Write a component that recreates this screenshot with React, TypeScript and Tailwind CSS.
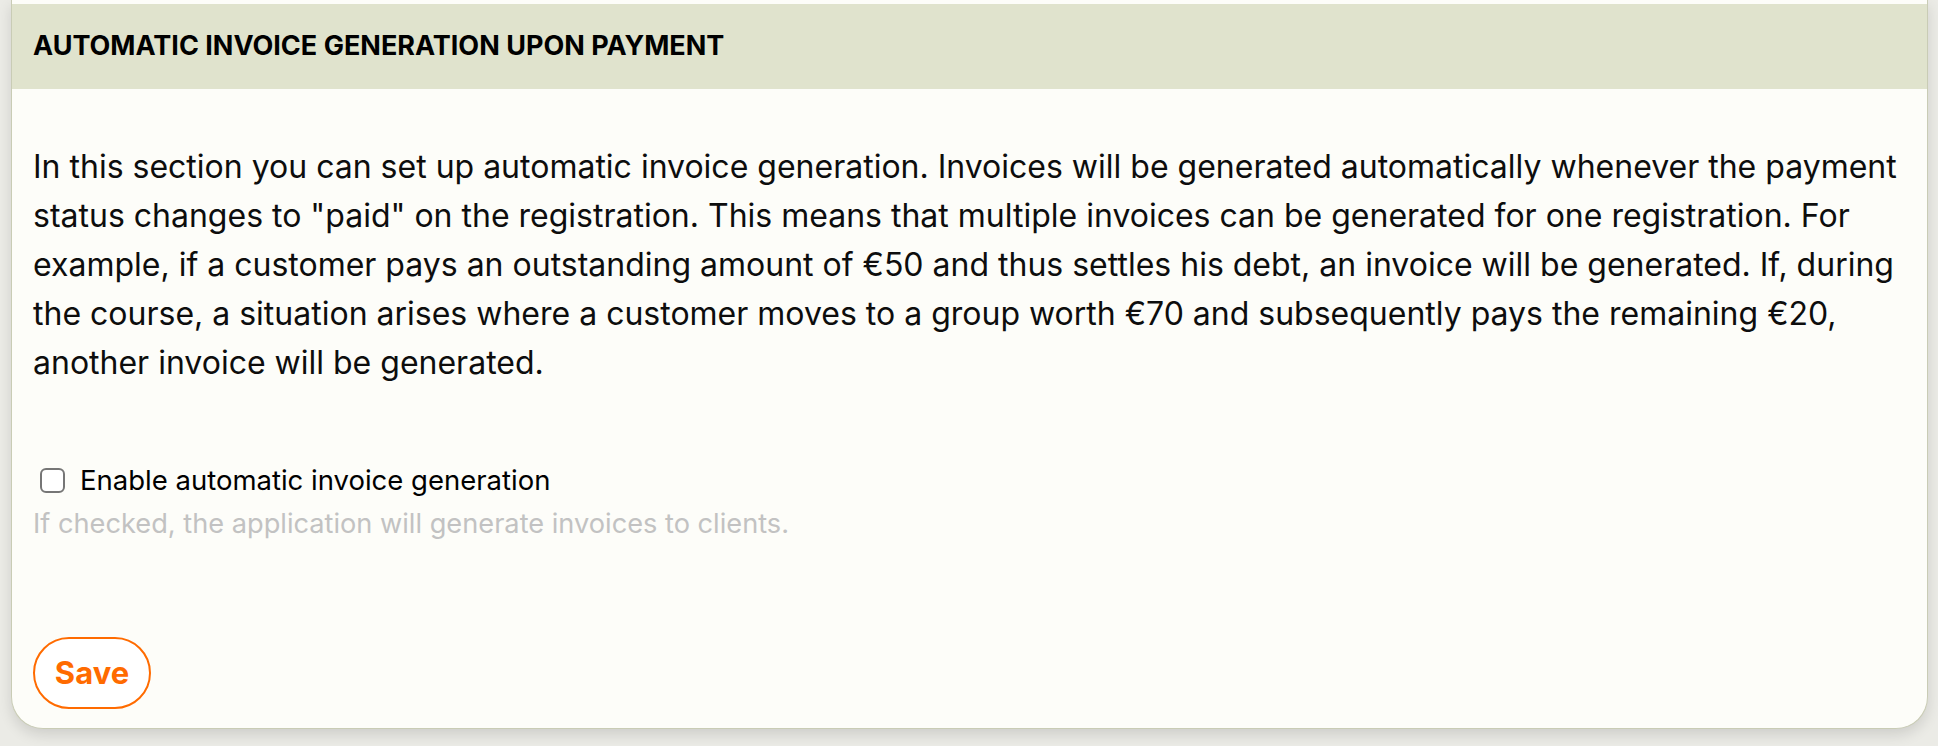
export default function App() {
  return (
    <div className="min-h-[746px] w-full bg-[#ebebe6] pl-[11px] pr-[10px] [font-family:Inter,sans-serif]">
      <section className="overflow-hidden rounded-b-[32px] border-x border-b border-[#c9ccb5] bg-[#fdfdf9] pt-[4px] shadow-[0_6px_14px_rgba(0,0,0,0.12)]">
        <header className="flex h-[85px] items-center bg-[#e0e3cd] px-[21px]">
          <h2 className="text-[27px] font-bold text-black">AUTOMATIC INVOICE GENERATION UPON PAYMENT</h2>
        </header>

        <div className="px-[21px] pb-[19px]">
          <p className="mt-[53px] text-[32px] leading-[49px] text-[#0d0d0d]">
            In this section you can set up automatic invoice generation. Invoices will be generated automatically whenever
            the payment status changes to "paid" on the registration. This means that multiple invoices can be generated
            for one registration. For example, if a customer pays an outstanding amount of €50 and thus settles his debt,
            an invoice will be generated. If, during the course, a situation arises where a customer moves to a group
            worth €70 and subsequently pays the remaining €20, another invoice will be generated.
          </p>

          <label className="mt-[76px] flex h-[34px] items-center gap-[15px] pl-[7px]">
            <input
              type="checkbox"
              className="h-[25px] w-[25px] appearance-none rounded-[6px] border-2 border-[#767676] bg-white"
            />
            <span className="text-[27.5px] leading-[34px] text-black">Enable automatic invoice generation</span>
          </label>
          <p className="mt-[10px] text-[27.2px] leading-[34px] text-[#c2c2c2]">
            If checked, the application will generate invoices to clients.
          </p>

          <button className="mt-[96px] flex h-[72px] w-[118px] items-center justify-center rounded-full border-2 border-[#ff6b00] bg-white text-[31px] font-bold text-[#ff6b00]">
            Save
          </button>
        </div>
      </section>
    </div>
  );
}
